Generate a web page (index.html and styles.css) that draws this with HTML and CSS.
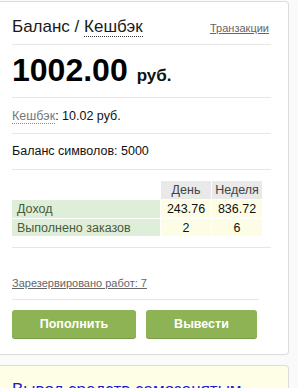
FILE: index.html
```html
<!DOCTYPE html>
<html lang="ru">
<head>
<meta charset="utf-8">
<link rel="stylesheet" href="styles.css">
</head>
<body>
<div class="card">
  <div class="sec head">
    <div class="title">Баланс / <span class="dotted">Кешбэк</span></div>
    <a class="trans" href="#">Транзакции</a>
  </div>
  <div class="sec amount">
    <span class="num">1002.00</span><span class="cur">руб.</span>
  </div>
  <div class="sec line cash">
    <span class="dotted gray">Кешбэк</span>: 10.02 руб.
  </div>
  <div class="sec line syms">Баланс символов: 5000</div>
  <div class="sec stats">
    <table class="tbl">
      <tr class="hrow"><td class="empty"></td><th>День</th><th>Неделя</th></tr>
      <tr class="r1"><td class="lbl">Доход</td><td class="val">243.76</td><td class="val">836.72</td></tr>
      <tr class="r2"><td class="lbl">Выполнено заказов</td><td class="val">2</td><td class="val">6</td></tr>
    </table>
  </div>
  <div class="reserved"><a href="#">Зарезервировано работ: 7</a></div>
  <div class="buttons">
    <button class="btn b1">Пополнить</button>
    <button class="btn b2">Вывести</button>
  </div>
</div>
<div class="note">
  <a href="#">Вывод средств самозанятым</a>
</div>
</body>
</html>
```
FILE: styles.css
```css
html, body {
  margin: 0;
  padding: 0;
  background: #fafafa;
}
body {
  font-family: "Liberation Sans", Arial, sans-serif;
  color: #111;
  font-size: 12px;
  padding-top: 1px;
}
.card {
  width: 259px;
  background: #fff;
  border: 1px solid #dcdcdc;
  border-left: none;
  border-radius: 0 4px 4px 0;
  padding: 0 17px 0 12px;
  display: flex;
  flex-direction: column;
}
.sec {
  border-bottom: 1px solid #e6e6e6;
}
.head {
  display: flex;
  justify-content: space-between;
  align-items: baseline;
  padding: 14px 0 7px;
}
.title {
  font-size: 17px;
  line-height: 21px;
  color: #1a1a1a;
}
.dotted {
  border-bottom: 1px dotted #333;
}
.dotted.gray {
  color: #777;
  border-bottom-color: #888;
}
.trans {
  font-size: 11px;
  line-height: 14px;
  color: #666;
  text-decoration: underline;
  margin-right: 2px;
}
.amount {
  padding: 7px 0 9px;
  height: 36px;
  display: flex;
  align-items: baseline;
}
.num {
  font-size: 32px;
  line-height: 36px;
  font-weight: bold;
  color: #000;
}
.cur {
  font-size: 17px;
  line-height: 20px;
  font-weight: bold;
  margin-left: 9px;
}
.line {
  font-size: 12.5px;
  line-height: 16px;
}
.cash {
  padding: 10px 0 9px;
}
.syms {
  padding: 9px 0 10px;
}
.stats {
  padding: 10px 0 10px;
}
.tbl {
  border-collapse: separate;
  border-spacing: 1px;
  margin-left: -1px;
  font-size: 12.5px;
}
.tbl th, .tbl td {
  padding: 0;
  height: 18px;
}
.tbl th {
  font-weight: normal;
  background: #e9e9e9;
  color: #444;
  width: 50px;
  text-align: center;
}
.tbl .empty {
  width: 148px;
  background: transparent;
}
.tbl .lbl {
  background: #dfeed8;
  color: #4a5a3c;
  padding-left: 5px;
}
.tbl .val {
  background: #fdfde6;
  text-align: center;
  color: #111;
}
.tbl .r2 td {
  height: 17px;
}
.reserved {
  width: 247px;
  padding: 28px 0 9px;
  border-bottom: 1px solid #e6e6e6;
  font-size: 11px;
  line-height: 14px;
}
.reserved a {
  color: #666;
  text-decoration: underline;
}
.buttons {
  display: flex;
  gap: 10px;
  padding: 10px 0 16px;
}
.btn {
  height: 28px;
  border: none;
  border-radius: 3px;
  background: #8db355;
  color: #fff;
  font-family: "Liberation Sans", Arial, sans-serif;
  font-size: 12.5px;
  font-weight: bold;
  box-shadow: 0 1px 0 #7a9c48;
  padding: 0;
}
.b1 { width: 124px; }
.b2 { width: 111px; }
.note {
  margin-top: 10px;
  width: 276px;
  height: 40px;
  background: #fefee6;
  border: 1px solid #dcdcdc;
  border-left: none;
  border-radius: 0 4px 4px 0;
  padding: 14px 0 0 12px;
}
.note a {
  font-size: 17px;
  line-height: 20px;
  color: #1a1ad0;
  text-decoration: none;
}
```
